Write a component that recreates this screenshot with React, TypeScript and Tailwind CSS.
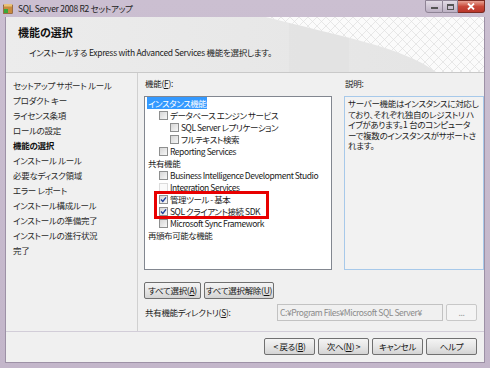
import React from "react";

const navItems = [
  "セットアップ サポート ルール",
  "プロダクト キー",
  "ライセンス条項",
  "ロールの設定",
  "機能の選択",
  "インストール ルール",
  "必要なディスク領域",
  "エラー レポート",
  "インストール構成ルール",
  "インストールの準備完了",
  "インストールの進行状況",
  "完了",
];

type Row = { label: string; level: number; box?: "on" | "off" | "faint"; selected?: boolean };

const rows: Row[] = [
  { label: "インスタンス機能", level: 0, selected: true },
  { label: "データベース エンジン サービス", level: 1, box: "off" },
  { label: "SQL Server レプリケーション", level: 2, box: "off" },
  { label: "フルテキスト検索", level: 2, box: "off" },
  { label: "Reporting Services", level: 1, box: "off" },
  { label: "共有機能", level: 0 },
  { label: "Business Intelligence Development Studio", level: 1, box: "off" },
  { label: "Integration Services", level: 1, box: "faint" },
  { label: "管理ツール - 基本", level: 1, box: "on" },
  { label: "SQL クライアント接続 SDK", level: 1, box: "on" },
  { label: "Microsoft Sync Framework", level: 1, box: "off" },
  { label: "再頒布可能な機能", level: 0 },
];

const CheckBox = ({ state }: { state: "on" | "off" | "faint" }) => (
  <span
    className={
      "w-[9px] h-[9px] shrink-0 border flex items-center justify-center " +
      (state === "faint"
        ? "border-[#dcdcdc] bg-[#fafafa]"
        : "border-[#8e8f8f] bg-gradient-to-br from-[#d6d6d6] to-[#f7f7f7]")
    }
  >
    {state === "on" && (
      <svg width="7" height="7" viewBox="0 0 7 7">
        <path d="M1 3.6 L2.8 5.4 L6 1.4" fill="none" stroke="#20409a" strokeWidth="1.4" />
      </svg>
    )}
  </span>
);

const Btn = ({ children, w }: { children: React.ReactNode; w: string }) => (
  <button
    className={
      "h-[17px] rounded-[2px] border border-[#707070] bg-gradient-to-b from-[#f4f4f4] via-[#e6e6e6] to-[#d4d4d4] text-[8.5px] leading-[15px] text-[#111] whitespace-nowrap flex items-center justify-center " +
      w
    }
  >
    {children}
  </button>
);

export default function App() {
  return (
    <div className="w-[490px] h-[368px] flex flex-col overflow-hidden bg-gradient-to-b from-[#cbbfd1] to-[#c3b6ca] font-['Noto_Sans_CJK_JP','Noto_Sans',sans-serif] [font-feature-settings:'palt'] text-[8.5px] tracking-[-0.3px] text-[#1a1a1a]">
      {/* title bar */}
      <div className="h-[17px] flex items-start shrink-0">
        <svg className="ml-[3px] mt-[4px]" width="10" height="10" viewBox="0 0 10 10">
          <rect x="0.5" y="1" width="9" height="8.5" fill="#c98a3c" stroke="#7a4a1a" strokeWidth="0.6" />
          <rect x="1" y="0" width="8" height="2.5" fill="#e8c27a" />
          <rect x="1" y="5" width="4" height="4" fill="#3aa83a" />
        </svg>
        <span className="ml-[5px] mt-[2px] leading-[12px] text-[8.5px] text-[#222]">SQL Server 2008 R2 セットアップ</span>
        <div className="ml-auto mr-[5px] flex h-[13px]">
          <div className="w-[18px] rounded-bl-[3px] border border-[#8f8496] bg-gradient-to-b from-[#e2dbe5] to-[#bdb1c4] flex items-end justify-center pb-[3px]">
            <span className="w-[7px] h-[2px] bg-white border-[0.5px] border-[#555]" />
          </div>
          <div className="w-[15px] border-y border-r border-[#8f8496] bg-gradient-to-b from-[#e2dbe5] to-[#bdb1c4] flex items-center justify-center">
            <span className="w-[7px] h-[6px] border border-[#555] border-t-2 bg-transparent" />
          </div>
          <div className="w-[27px] rounded-br-[3px] border-y border-r border-[#7a2a22] bg-gradient-to-b from-[#e6a295] via-[#c9483a] to-[#b9352a] flex items-center justify-center">
            <svg width="8" height="7" viewBox="0 0 8 7">
              <path d="M1 0.5 L7 6.5 M7 0.5 L1 6.5" stroke="#fff" strokeWidth="1.8" />
            </svg>
          </div>
        </div>
      </div>

      {/* client */}
      <div className="flex-1 mx-[5px] mb-[5px] bg-[#f0f0f0] flex flex-col border-l border-r border-b border-[#9d91a6]">
        {/* header */}
        <div className="h-[56px] shrink-0 relative overflow-hidden bg-gradient-to-r from-[#ececec] to-[#e4e4e4] border-b border-[#c9c9c9]">
          <svg className="absolute right-0 top-0" width="230" height="55" viewBox="0 0 230 55">
            <defs>
              <pattern id="mesh" width="9" height="9" patternUnits="userSpaceOnUse">
                <path d="M0 0 L9 9 M9 0 L0 9" stroke="#dedede" strokeWidth="0.7" />
              </pattern>
            </defs>
            <rect x="35" y="0" width="60" height="55" fill="#dcdcdc" opacity="0.35" />
            <path d="M12 0 C80 18 150 30 182 55 L230 55 L230 0 Z" fill="#fbfbfb" />
            <path d="M12 0 C80 18 150 30 182 55 L230 55 L230 0 Z" fill="url(#mesh)" />
          </svg>
          <div className="relative pl-[12px] pt-[8px] text-[11px] leading-[14px] tracking-normal font-bold text-[#111]">機能の選択</div>
          <div className="relative pl-[23px] pt-[7px] text-[8.5px] leading-[12px] text-[#222]">
            インストールする Express with Advanced Services 機能を選択します。
          </div>
        </div>

        {/* body */}
        <div className="h-[259px] shrink-0 flex border-b border-[#d2cdd8]">
          <div className="w-[132px] shrink-0 border-r border-[#d0d0d0] pl-[7px] pt-[5px]">
            {navItems.map((n) => (
              <div
                key={n}
                className={"h-[15px] leading-[15px] " + (n === "機能の選択" ? "font-bold text-[#111]" : "text-[#2a2a2a]")}
              >
                {n}
              </div>
            ))}
          </div>

          <div className="flex-1 flex flex-col pl-[6px] pt-[4px]">
            <div className="flex gap-[12px]">
              <div className="w-[188px] flex flex-col">
                <div className="h-[12px] leading-[12px] pl-[1px]">
                  機能(<u>F</u>):
                </div>
                <div className="mt-[7px] h-[174px] border border-[#828790] bg-white relative">
                  {rows.map((r) => (
                    <div
                      key={r.label}
                      className={
                        "h-[12px] flex items-center gap-[1px] whitespace-nowrap tracking-[-0.45px] " +
                        (r.level === 0 ? "pl-[2px]" : r.level === 1 ? "pl-[14px]" : "pl-[25px]")
                      }
                    >
                      {r.box && <CheckBox state={r.box} />}
                      <span
                        className={
                          "leading-[12px] px-[1px] " + (r.selected ? "bg-[#3399ff] text-white" : "text-[#1a1a1a]")
                        }
                      >
                        {r.label}
                      </span>
                    </div>
                  ))}
                  <div className="absolute left-[9px] top-[94px] w-[115px] h-[28px] border-[3px] border-[#e80000]" />
                </div>
              </div>
              <div className="flex-1 flex flex-col">
                <div className="h-[12px] leading-[12px] pl-[1px]">説明:</div>
                <div className="mt-[7px] h-[174px] border border-[#a7c9ea] bg-[#f2f2f2] pl-[3px] pt-[1px] leading-[10.5px] whitespace-nowrap overflow-hidden text-[#222]">
                  サーバー機能はインスタンスに対応し
                  <br />
                  ており、それぞれ独自のレジストリ ハ
                  <br />
                  イブがあります。1 台のコンピュータ
                  <br />
                  ーで複数のインスタンスがサポートさ
                  <br />
                  れます。
                </div>
              </div>
            </div>

            <div className="mt-[12px] flex gap-[3px]">
              <Btn w="w-[57px]">
                すべて選択(<u>A</u>)
              </Btn>
              <Btn w="w-[70px]">
                すべて選択解除(<u>U</u>)
              </Btn>
            </div>

            <div className="mt-[5px] flex items-center h-[17px]">
              <span className="w-[133px] pl-[1px] whitespace-nowrap">
                共有機能ディレクトリ(<u>S</u>):
              </span>
              <div className="w-[166px] h-[17px] border border-[#c2c2c2] bg-[#f0f0f0] text-[#8a8a8a] pl-[2px] leading-[15px] tracking-[-0.45px] whitespace-nowrap overflow-hidden">
                C:¥Program Files¥Microsoft SQL Server¥
              </div>
              <div className="ml-[3px] w-[31px] h-[17px] rounded-[2px] border border-[#c8c8c8] bg-[#f4f4f4] text-[#a0a0a0] flex items-center justify-center leading-none">
                ...
              </div>
            </div>
          </div>
        </div>

        {/* footer */}
        <div className="flex-1 flex justify-end items-start pt-[6px] pr-[7px] gap-[3px]">
          <Btn w="w-[51px]">
            &lt; 戻る(<u>B</u>)
          </Btn>
          <Btn w="w-[51px]">
            次へ(<u>N</u>) &gt;
          </Btn>
          <Btn w="w-[51px]">キャンセル</Btn>
          <Btn w="w-[51px]">ヘルプ</Btn>
        </div>
      </div>
    </div>
  );
}
